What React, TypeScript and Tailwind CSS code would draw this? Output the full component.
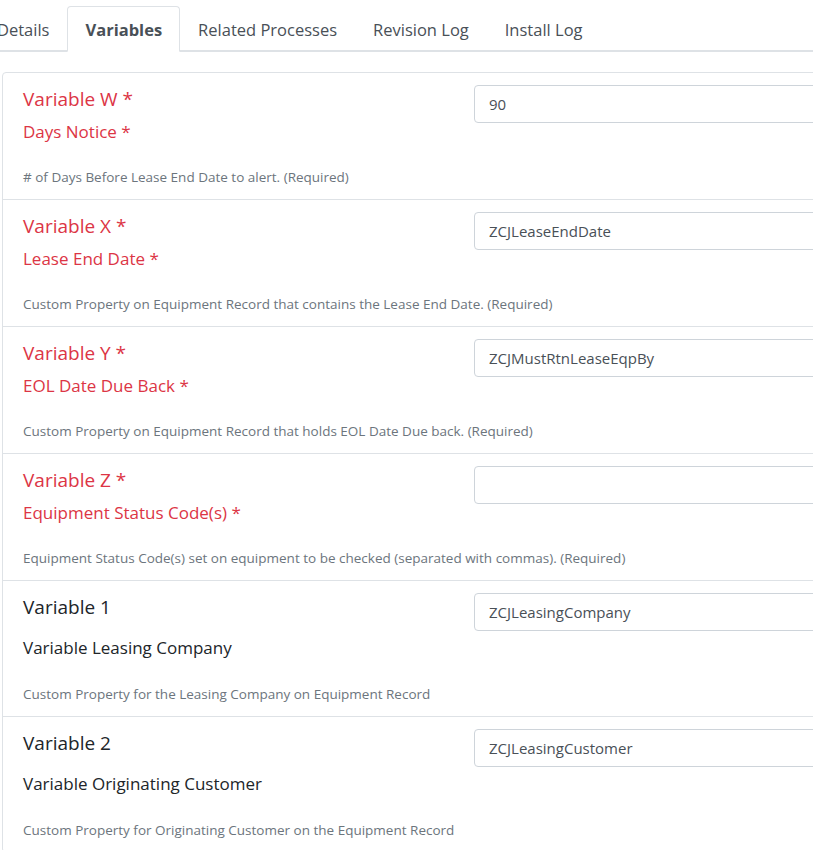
import React from 'react';

type Variable = {
  name: string;
  label: string;
  description: string;
  value: string;
  required: boolean;
};

const variables: Variable[] = [
  {
    name: 'Variable W',
    label: 'Days Notice',
    description: '# of Days Before Lease End Date to alert. (Required)',
    value: '90',
    required: true,
  },
  {
    name: 'Variable X',
    label: 'Lease End Date',
    description: 'Custom Property on Equipment Record that contains the Lease End Date. (Required)',
    value: 'ZCJLeaseEndDate',
    required: true,
  },
  {
    name: 'Variable Y',
    label: 'EOL Date Due Back',
    description: 'Custom Property on Equipment Record that holds EOL Date Due back. (Required)',
    value: 'ZCJMustRtnLeaseEqpBy',
    required: true,
  },
  {
    name: 'Variable Z',
    label: 'Equipment Status Code(s)',
    description: 'Equipment Status Code(s) set on equipment to be checked (separated with commas). (Required)',
    value: '',
    required: true,
  },
  {
    name: 'Variable 1',
    label: 'Variable Leasing Company',
    description: 'Custom Property for the Leasing Company on Equipment Record',
    value: 'ZCJLeasingCompany',
    required: false,
  },
  {
    name: 'Variable 2',
    label: 'Variable Originating Customer',
    description: 'Custom Property for Originating Customer on the Equipment Record',
    value: 'ZCJLeasingCustomer',
    required: false,
  },
];

const tabs = ['Details', 'Variables', 'Related Processes', 'Revision Log', 'Install Log'];

export default function App() {
  return (
    <div
      className="h-[850px] w-[813px] overflow-hidden bg-white"
      style={{ fontFamily: '"Open Sans", "Noto Sans", sans-serif' }}
    >
      {/* Tabs */}
      <div className="pt-[6px]">
        <div className="flex w-[1100px] -ml-[21px] border-b-2 border-[#dee2e6]">
          {tabs.map((tab) => (
            <div
              key={tab}
              className={`-mb-[2px] flex h-[46px] items-center rounded-t-[4px] border px-[17px] pt-[3px] text-[16.5px] text-[#495057] ${
                tab === 'Variables'
                  ? 'border-[#dee2e6] border-b-white bg-white px-[16px] font-bold'
                  : 'border-transparent'
              }`}
            >
              {tab}
            </div>
          ))}
        </div>
      </div>

      {/* Variables card */}
      <div className="mt-[20px] ml-[2px] w-[1100px] rounded-[4px] border border-[#dee2e6]">
        {variables.map((v, i) => (
          <div
            key={v.name}
            className={`flex pt-[12px] pb-[12px] ${i > 0 ? 'border-t border-[#dee2e6]' : ''}`}
          >
            <div className="w-[471px] shrink-0 px-[20px]">
              <div
                className={`text-[19px] leading-[28px] ${
                  v.required ? 'text-[#dc3545]' : 'text-[#212529]'
                }`}
              >
                {v.name}
                {v.required && ' *'}
              </div>
              <div
                className={`text-[17px] leading-[26px] ${
                  v.required ? 'mt-[6px] text-[#dc3545]' : 'mt-[14px] text-[#212529]'
                }`}
              >
                {v.label}
                {v.required && ' *'}
              </div>
              <div
                className={`whitespace-nowrap text-[13.5px] leading-[20px] text-[#6c757d] ${
                  v.required ? 'mt-[22px]' : 'mt-[23px]'
                }`}
              >
                {v.description}
              </div>
            </div>
            <div className="flex-1 pr-[20px]">
              <input
                readOnly
                value={v.value}
                className="h-[38px] w-full rounded-[4px] border border-[#ced4da] bg-white px-[14px] text-[15px] text-[#495057] outline-none"
              />
            </div>
          </div>
        ))}
      </div>
    </div>
  );
}
